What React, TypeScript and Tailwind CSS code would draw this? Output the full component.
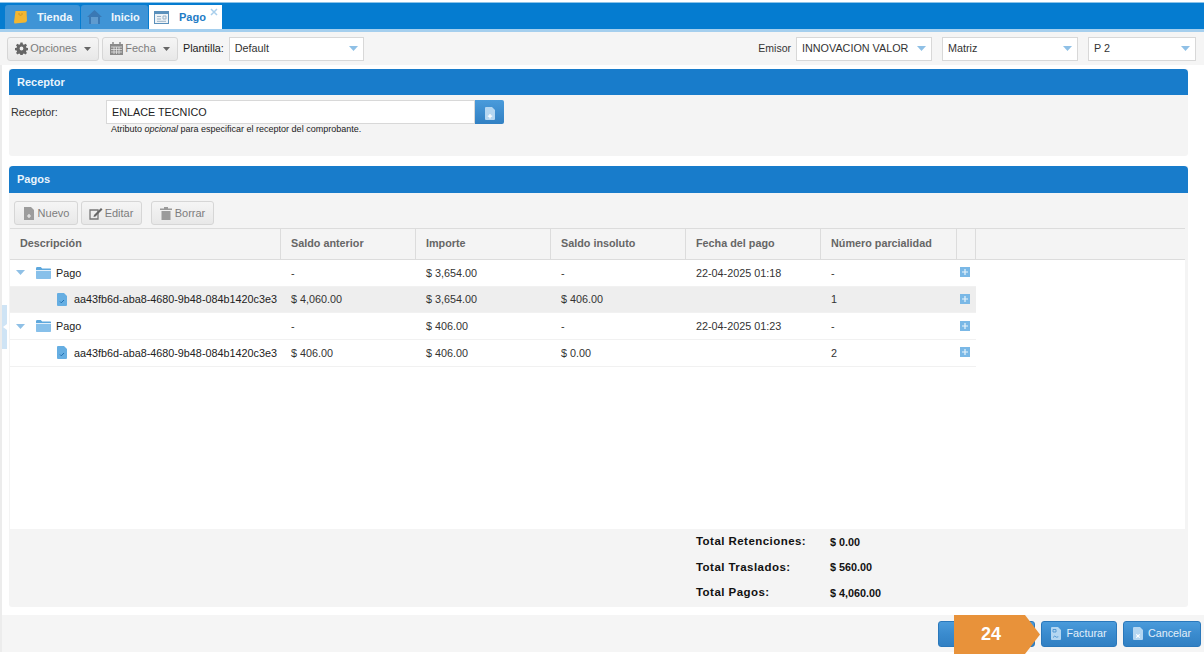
import React from "react";

const Caret = ({ w = 9 }: { w?: number }) => (
  <svg width={w} height="5" viewBox="0 0 9 5" className="shrink-0"><path d="M0 0h9L4.500 5z" fill="#8fc0e6" /></svg>
);
const SmallCaret = () => (
  <svg width="7" height="4" viewBox="0 0 7 4" className="shrink-0"><path d="M0 0h7L3.500 4z" fill="#666" /></svg>
);
const Plus = () => (
  <svg width="10" height="10" viewBox="0 0 10 10" className="shrink-0"><rect width="10" height="10" fill="#7ab8e6" /><path d="M5 2v6M2 5h6" stroke="#e8f3fb" strokeWidth="1.200" /></svg>
);
const Folder = () => (
  <svg width="15" height="12" viewBox="0 0 15 12" className="shrink-0"><path d="M0 1.500C0 .7.500 0 1.200 0h3.600l1.400 1.600H14c.6 0 1 .4 1 1V3H0z" fill="#5ea8dd" /><path d="M0 3.800h15v7.200c0 .6-.4 1-1 1H1c-.6 0-1-.4-1-1z" fill="#87c0ea" /></svg>
);
const DocCheck = () => (
  <svg width="10" height="13" viewBox="0 0 10 13" className="shrink-0"><path d="M1 0h6l3 3v9a1 1 0 0 1-1 1H1a1 1 0 0 1-1-1V1a1 1 0 0 1 1-1z" fill="#66aee2" /><path d="M3 8.500l1.300 1.300L7 7" stroke="#1f6fb0" strokeWidth="1" fill="none" /></svg>
);
const Doc = ({ mark }: { mark: string }) => (
  <svg width="10" height="13" viewBox="0 0 10 13" className="shrink-0">
    <path d="M1 0h6l3 3v9a1 1 0 0 1-1 1H1a1 1 0 0 1-1-1V1a1 1 0 0 1 1-1z" fill="#b4d6f1" />
    {mark === "x" && <path d="M3.300 7.300l3.400 3.400M6.700 7.300l-3.400 3.400" stroke="#fff" strokeWidth="1.200" />}
    {mark === "+" && <path d="M5 7v4.500M2.800 9.200h4.400" stroke="#fff" strokeWidth="1.200" />}
    {mark === "p" && <path d="M2 2.500h3v2.500H2zM2 10.500l1.800-1.500 1.500 1.200 2-.4" stroke="#4d94d0" strokeWidth=".9" fill="none" />}
  </svg>
);

const GrayBtn = ({ icon, label, caret, w }: { icon: React.ReactNode; label: string; caret?: boolean; w: string }) => (
  <div className={`${w} h-[24px] flex items-center justify-center gap-[2px] rounded-[3px] border border-[#d6d6d6] bg-gradient-to-b from-[#f5f5f5] to-[#e8e8e8] text-[11px] text-[#7d7d7d]`}>
    {icon}
    <span>{label}</span>
    {caret && <span className="ml-[5px]"><SmallCaret /></span>}
  </div>
);

const Select = ({ text, w }: { text: string; w: string }) => (
  <div className={`${w} h-[24px] bg-white border border-[#d8d8d8] flex items-center justify-between pl-[5px] pr-[5px] text-[10.8px] text-[#333]`}>
    <span>{text}</span>
    <Caret />
  </div>
);

const cols = ["w-[271px]", "w-[135px]", "w-[135px]", "w-[135px]", "w-[135px]", "w-[136px]", "w-[19px]"];

const Row = ({ cells, child, hl }: { cells: string[]; child?: boolean; hl?: boolean }) => (
  <div className={`flex h-[26.67px] w-[966px] items-center border-b border-[#f1f1f1] text-[10.8px] text-[#333] ${hl ? "bg-[#eeeeee]" : "bg-white"}`}>
    <div className={`${cols[0]} flex items-center text-[#222]`}>
      {child ? (
        <div className="flex items-center pl-[47px] gap-[7px]"><DocCheck /><span>{cells[0]}</span></div>
      ) : (
        <div className="flex items-center pl-[6px]"><Caret /><span className="ml-[11px]"><Folder /></span><span className="ml-[5px]">{cells[0]}</span></div>
      )}
    </div>
    {cells.slice(1).map((c, i) => (
      <div key={i} className={`${cols[i + 1]} pl-[10px]`}>{c}</div>
    ))}
    <div className={`${cols[6]} flex justify-center pr-[3px] -mt-[1px]`}><Plus /></div>
  </div>
);

const Total = ({ label, value }: { label: string; value: string }) => (
  <div className="flex h-[25.5px] items-center text-[11.5px] font-bold text-[#111]">
    <span className="w-[134px] tracking-[0.45px]">{label}</span>
    <span className="text-[10.8px]">{value}</span>
  </div>
);

const PanelHead = ({ title }: { title: string }) => (
  <div className="h-[26px] bg-[#187ccb] rounded-t-[4px] flex items-center pl-[8px] text-[11px] font-bold text-[#eaf4fb]">{title}</div>
);

const BlueBtn = ({ mark, label, w }: { mark: string; label?: string; w: string }) => (
  <div className={`${w} h-[26px] flex items-center justify-center gap-[5px] rounded-[3px] border border-[#2a78bb] bg-gradient-to-b from-[#4a9bdb] via-[#3a8bce] to-[#3180c3] text-[10.8px] text-[#e3f0fa]`}>
    <Doc mark={mark} />
    {label && <span>{label}</span>}
  </div>
);

export default function App() {
  return (
    <div className="relative w-[1204px] h-[657px] overflow-hidden bg-white font-['Liberation_Sans',Arial,sans-serif]">
      <div className="mt-[2px] border-t border-[#8cc3e8] h-[27px] bg-[#057cd0] flex items-end pl-[5px] gap-[1px]">
        <div className="w-[75px] h-[24px] bg-[#3f94d6] rounded-t-[3px] flex items-center pl-[9px] gap-[10px] text-[11px] font-bold text-[#eef6fc]">
          <svg width="13" height="13" viewBox="0 0 13 13"><path d="M1.500 0h11l.5 10-1.500 1.500-11 1L0 11z" fill="#f2b632" /><path d="M5 2v1.500c0 1 3 1 3 0V2" stroke="#c98d18" fill="none" strokeWidth=".8" /></svg>
          <span>Tienda</span>
        </div>
        <div className="w-[67px] h-[24px] bg-[#3f94d6] rounded-t-[3px] flex items-center pl-[6px] gap-[9px] text-[11px] font-bold text-[#eef6fc]">
          <svg width="15" height="14" viewBox="0 0 15 14"><path d="M7.500 0L15 7h-2v7H2V7H0z" fill="#3a78b4" /><path d="M4 7h7v7H4z" fill="#5f9bcf" /></svg>
          <span>Inicio</span>
        </div>
        <div className="relative w-[73px] h-[24px] bg-white flex items-center pl-[5px] gap-[10px] text-[11px] font-bold text-[#1f7cc6]">
          <svg width="15" height="13" viewBox="0 0 15 13"><rect x=".5" y=".5" width="14" height="12" fill="#eef3f7" stroke="#5b90bb" /><rect x=".5" y=".5" width="14" height="2.500" fill="#5b90bb" /><path d="M3 5.500h4M3 8h4M3 10.300h9M9 5h3v3H9z" stroke="#9ab3c7" fill="none" /></svg>
          <span>Pago</span>
          <svg className="absolute top-[3px] right-[4px]" width="8" height="8" viewBox="0 0 8 8"><path d="M1 1l6 6M7 1l-6 6" stroke="#a9cfec" strokeWidth="1.500" /></svg>
        </div>
      </div>
      <div className="h-[3px] bg-[#a5cfee]" />
      <div className="h-[33px] bg-[#f5f5f5] flex items-center pl-[7px] pr-[8px]">
        <GrayBtn w="w-[92px]" caret label="Opciones" icon={
          <svg width="13" height="13" viewBox="0 0 24 24" fill="#666" fillRule="evenodd"><path d="M10 1h4l.6 3.200 2 .8L19.400 3l2.800 2.800-2 2.800.8 2 3 .4v4l-3 .6-.8 2 1.900 2.600-2.800 2.800-2.700-1.800-2 .8-.6 3.200h-4l-.6-3.200-2-.8-2.700 1.800-2.800-2.800 1.900-2.600-.8-2-3-.6v-4l3-.4.8-2-2-2.800L4.600 3l2.800 2 2-.8zM12 8.500a3.500 3.500 0 1 0 0 7 3.500 3.500 0 0 0 0-7z" /></svg>
        } />
        <div className="ml-[3px]">
          <GrayBtn w="w-[76px]" caret label="Fecha" icon={
            <svg width="13" height="13" viewBox="0 0 13 13" fill="#8a8a8a"><path d="M0 2h13v11H0z" /><path d="M3 0v3M10 0v3" stroke="#8a8a8a" strokeWidth="1.500" /><path d="M1 5h11M1 7.500h11M1 10h11M4 5v7M6.500 5v7M9 5v7" stroke="#eee" strokeWidth=".7" /></svg>
          } />
        </div>
        <span className="ml-[5px] text-[10.8px] text-[#222]">Plantilla:</span>
        <div className="ml-[5px]"><Select text="Default" w="w-[135px]" /></div>
        <span className="ml-auto text-[10.5px] text-[#333]">Emisor</span>
        <div className="ml-[5px]"><Select text="INNOVACION VALOR" w="w-[136px]" /></div>
        <div className="ml-[10px]"><Select text="Matriz" w="w-[136px]" /></div>
        <div className="ml-[10px]"><Select text="P 2" w="w-[108px]" /></div>
      </div>

      <div className="relative pl-[9px] pr-[16px] pt-[4px]">
        <div className="h-[87px] bg-[#f4f4f4] rounded-b-[3px]">
          <PanelHead title="Receptor" />
          <div className="flex pl-[2px] pt-[5px]">
            <span className="w-[95px] pt-[4px] text-[10.8px] text-[#333]">Receptor:</span>
            <div>
              <div className="flex">
                <div className="w-[369px] h-[24px] bg-white border border-[#d8d8d8] flex items-center pl-[5px] pt-[1px] text-[10.8px] text-[#222]">ENLACE TECNICO</div>
                <div className="w-[29px] h-[24px] rounded-r-[2px] bg-gradient-to-b from-[#4a9bdb] to-[#3180c3] flex items-center justify-center pt-[3px]"><Doc mark="+" /></div>
              </div>
              <div className="pl-[5px] text-[9px] leading-[11px] text-[#222]">Atributo <i>opcional</i> para especificar el receptor del comprobante.</div>
            </div>
          </div>
        </div>

        <div className="mt-[10px] h-[441px] bg-[#f4f4f4] rounded-b-[3px] flex flex-col">
          <div className="h-[27px] bg-[#187ccb] rounded-t-[4px] flex items-center pl-[8px] text-[11px] font-bold text-[#eaf4fb]">Pagos</div>
          <div className="h-[35px] flex items-start pl-[5px] pt-[8px]">
            <GrayBtn w="w-[64px]" label="Nuevo" icon={
              <svg width="12" height="13" viewBox="0 0 12 13" className="mr-[1px]"><path d="M1 0h7l3 3v10H1z" fill="#9c9c9c" /><path d="M6 7v4M4 9h4" stroke="#eee" strokeWidth="1.200" /></svg>
            } />
            <div className="ml-[3px]"><GrayBtn w="w-[61px]" label="Editar" icon={
              <svg width="14" height="13" viewBox="0 0 14 13" className="-ml-[1px]"><path d="M1 3h8v9H1z" fill="none" stroke="#777" strokeWidth="1.300" /><path d="M5 8l7-7 1.500 1.500-7 7L4.500 10z" fill="#666" /></svg>
            } /></div>
            <div className="ml-[9px]"><GrayBtn w="w-[63px]" label="Borrar" icon={
              <svg width="12" height="13" viewBox="0 0 12 13" className="mr-[1px]"><path d="M0 1.500h12V3H0zM4 0h4v1.500H4zM1.500 4h9v9h-9z" fill="#9a9a9a" /></svg>
            } /></div>
          </div>
          <div className="ml-[1px] mr-[3px] flex-1 flex flex-col">
            <div className="flex h-[32px] border-y border-[#dcdcdc] bg-[#f4f4f4] text-[10.8px] font-bold text-[#666]">
              {["Descripción", "Saldo anterior", "Importe", "Saldo insoluto", "Fecha del pago", "Número parcialidad", ""].map((h, i) => (
                <div key={i} className={`${cols[i]} h-full border-r border-[#dcdcdc] pl-[10px] flex items-center pb-[2px]`}>{h}</div>
              ))}
            </div>
            <div className="h-[269px] bg-white">
              <Row cells={["Pago", "-", "$ 3,654.00", "-", "22-04-2025 01:18", "-"]} />
              <Row child hl cells={["aa43fb6d-aba8-4680-9b48-084b1420c3e3", "$ 4,060.00", "$ 3,654.00", "$ 406.00", "", "1"]} />
              <Row cells={["Pago", "-", "$ 406.00", "-", "22-04-2025 01:23", "-"]} />
              <Row child cells={["aa43fb6d-aba8-4680-9b48-084b1420c3e3", "$ 406.00", "$ 406.00", "$ 0.00", "", "2"]} />
            </div>
            <div className="pl-[686px]">
              <Total label="Total Retenciones:" value="$ 0.00" />
              <Total label="Total Traslados:" value="$ 560.00" />
              <Total label="Total Pagos:" value="$ 4,060.00" />
            </div>
          </div>
        </div>
      </div>

      <div className="mt-[8px] h-[37px] bg-[#f5f5f5] flex items-center justify-end pr-[3px] gap-[6px]">
        <BlueBtn mark="p" w="w-[97px]" />
        <BlueBtn mark="p" label="Facturar" w="w-[76px]" />
        <BlueBtn mark="x" label="Cancelar" w="w-[78px]" />
      </div>

      <div className="absolute left-0 top-[65px] bottom-[5px] w-[2px] bg-[#ececec]" />
      <div className="absolute left-[2px] top-[305px] w-[5px] h-[44px] bg-[#cfe4f5] flex items-center justify-center">
        <svg width="4" height="6" viewBox="0 0 4 6"><path d="M4 0v6L0 3z" fill="#fff" /></svg>
      </div>

      <div className="absolute left-[954px] top-[615px] w-[86px] h-[39px]">
        <svg className="absolute inset-0" width="86" height="39" viewBox="0 0 86 39"><path d="M0 0h71l15 19.500L71 39H0z" fill="#e8923a" /></svg>
        <span className="absolute left-[27px] top-[9px] text-[18px] leading-[20px] font-bold text-white">24</span>
      </div>
    </div>
  );
}
